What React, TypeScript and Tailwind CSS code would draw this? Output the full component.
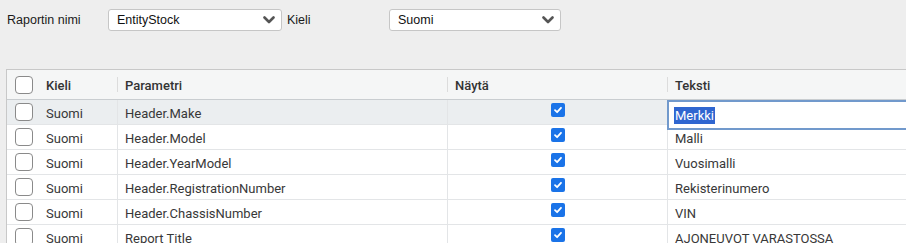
// Report text parameters — filter bar + editable grid

const ROWS = [
  { lang: 'Suomi', param: 'Header.Make', text: 'Merkki' },
  { lang: 'Suomi', param: 'Header.Model', text: 'Malli' },
  { lang: 'Suomi', param: 'Header.YearModel', text: 'Vuosimalli' },
  { lang: 'Suomi', param: 'Header.RegistrationNumber', text: 'Rekisterinumero' },
  { lang: 'Suomi', param: 'Header.ChassisNumber', text: 'VIN' },
  { lang: 'Suomi', param: 'Report Title', text: 'AJONEUVOT VARASTOSSA' },
]

function Chevron() {
  return (
    <svg width="12" height="8" viewBox="0 0 12 8" className="shrink-0">
      <path d="M1.5 1.5 L6 6 L10.5 1.5" fill="none" stroke="#555" strokeWidth="2.6" strokeLinecap="round" strokeLinejoin="round" />
    </svg>
  )
}

function Select({ value, width }: { value: string; width: string }) {
  return (
    <div className={`${width} h-[22px] flex items-center justify-between pl-[8px] pr-[6px] bg-white border border-[#c6c6c6] rounded-[3px] text-[12.5px] text-[#111]`}>
      <span>{value}</span>
      <Chevron />
    </div>
  )
}

function EmptyBox() {
  return <div className="w-[18px] h-[18px] rounded-[4px] border border-[#8a8a8a] bg-white" />
}

function CheckedBox() {
  return (
    <div className="w-[14px] h-[14px] rounded-[2px] bg-[#1a73e8] flex items-center justify-center">
      <svg width="10" height="10" viewBox="0 0 10 10">
        <path d="M2 5.2 L4.1 7.2 L8 2.8" fill="none" stroke="white" strokeWidth="1.8" strokeLinecap="round" strokeLinejoin="round" />
      </svg>
    </div>
  )
}

export default function App() {
  return (
    <div className="relative w-[906px] h-[243px] overflow-hidden bg-[#eeeeee]" style={{ fontFamily: '"Liberation Sans", Arial, sans-serif' }}>
      {/* ░▒▓ FILTER BAR ▓▒░ */}
      <div className="h-[69px] flex items-start pt-[9px] text-[12.5px] text-[#1a1a1a]">
        <div className="w-[108px] pl-[7px] h-[22px] flex items-center">Raportin nimi</div>
        <Select value="EntityStock" width="w-[174px]" />
        <div className="w-[107px] pl-[5px] h-[22px] flex items-center">Kieli</div>
        <Select value="Suomi" width="w-[172px]" />
      </div>

      {/* ░▒▓ GRID ▓▒░ */}
      <div className="ml-[6px] border-t border-l border-[#c8c8c8] bg-white text-[13px] text-[#383838]" style={{ fontFamily: 'Roboto, "Noto Sans", sans-serif' }}>
        <div className="flex h-[30px] bg-[#f5f6f6] border-b border-[#c9cdd0] font-medium text-[#333]">
          <div className="w-[31px] flex items-center pl-[8px]"><EmptyBox /></div>
          <div className="w-[79px] flex items-center pl-[8px] pt-[2px]">Kieli</div>
          <div className="w-[330px] flex items-center border-l border-[#dcdcdc] my-[7px] pl-[7px] pt-[2px]">Parametri</div>
          <div className="w-[220px] flex items-center border-l border-[#dcdcdc] my-[7px] pl-[7px] pt-[2px]">Näytä</div>
          <div className="flex-1 flex items-center border-l border-[#dcdcdc] my-[7px] pl-[7px] pt-[2px]">Teksti</div>
        </div>

        {ROWS.map((r, i) => (
          <div key={r.param} className={`flex h-[25px] border-b border-[#e3e5e7] ${i === 0 ? 'bg-[#ebeef0]' : 'bg-white'}`}>
            <div className="w-[31px] flex items-center pl-[8px]"><EmptyBox /></div>
            <div className="w-[79px] flex items-center pl-[8px] pt-[4px]">{r.lang}</div>
            <div className="w-[330px] flex items-center border-l border-[#e3e5e7] pl-[7px] pt-[4px]">{r.param}</div>
            <div className="w-[220px] flex justify-center border-l border-[#e3e5e7] pt-[3px]"><CheckedBox /></div>
            <div className="flex-1 flex items-center border-l border-[#e3e5e7] pl-[7px] pt-[4px]">{i === 0 ? '' : r.text}</div>
          </div>
        ))}
      </div>

      {/* ░▒▓ CELL EDITOR ▓▒░ */}
      <div className="absolute left-[667px] top-[100px] w-[260px] h-[30px] bg-white border-2 border-[#7199cc] flex items-center pl-[5px] text-[13px]" style={{ fontFamily: 'Roboto, "Noto Sans", sans-serif' }}>
        <span className="bg-[#2f66d0] text-white leading-[17px] px-[1px]">Merkki</span>
      </div>
    </div>
  )
}
